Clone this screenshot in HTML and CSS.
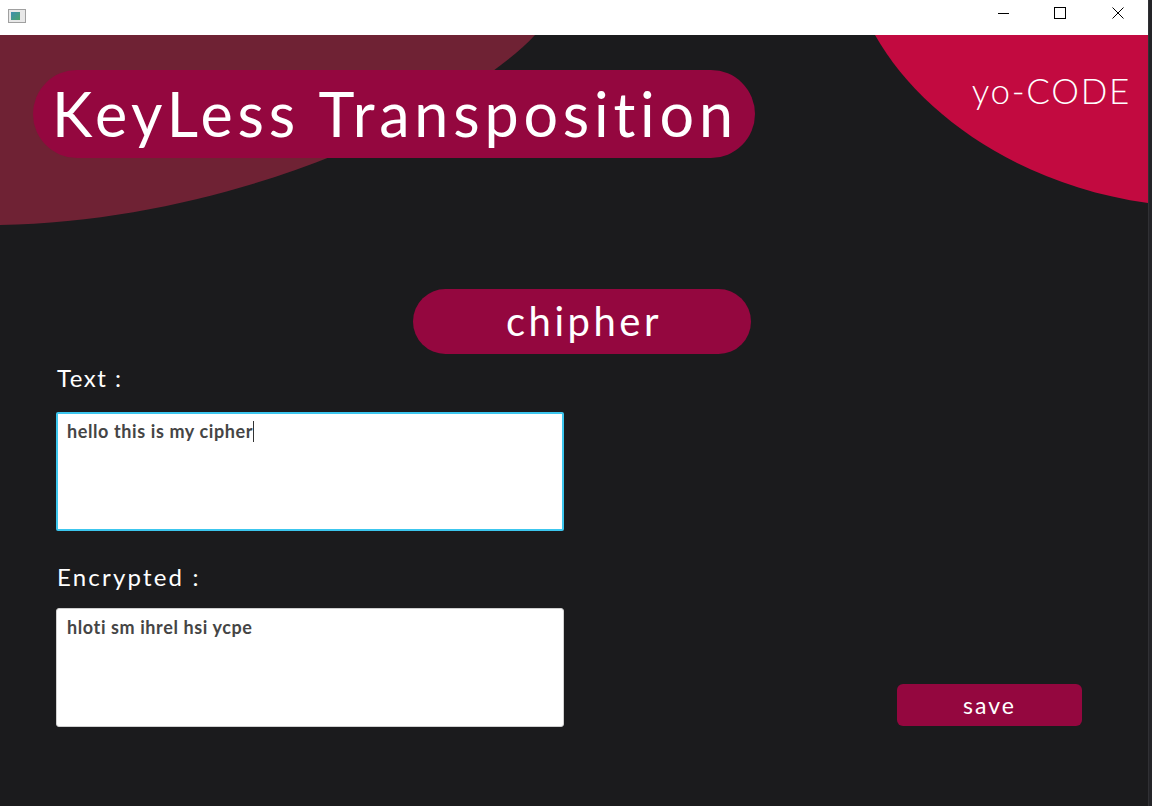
FILE: index.html
```html
<!DOCTYPE html>
<html>
<head>
<meta charset="utf-8">
<link rel="stylesheet" href="styles.css">
</head>
<body>
<div class="screen">
  <div class="window">
    <div class="titlebar">
      <div class="app-icon"><span class="app-icon-pane"></span></div>
      <div class="controls">
        <span class="ctrl">
          <svg width="12" height="12" viewBox="0 0 12 12"><path d="M0 6.5H11" stroke="#000" stroke-width="1"/></svg>
        </span>
        <span class="ctrl">
          <svg width="12" height="12" viewBox="0 0 12 12"><rect x="0.5" y="0.5" width="11" height="11" fill="none" stroke="#000" stroke-width="1"/></svg>
        </span>
        <span class="ctrl">
          <svg width="12" height="12" viewBox="0 0 12 12"><path d="M0.5 0.5L11.5 11.5M11.5 0.5L0.5 11.5" stroke="#000" stroke-width="1"/></svg>
        </span>
      </div>
    </div>
    <div class="app">
      <svg class="deco" width="1148" height="771" viewBox="0 0 1148 771">
        <path d="M0 0H535C470 70 250 185 0 190Z" fill="#6f2234"/>
        <path d="M875 0C920 80 1020 150 1148 168V0Z" fill="#c20a40"/>
      </svg>
      <header class="header">
        <h1 class="title">KeyLess Transposition</h1>
        <div class="brand">yo-CODE</div>
      </header>
      <div class="mode-row">
        <div class="mode">chipher</div>
      </div>
      <div class="form">
        <label class="label label-text">Text :</label>
        <div class="box box-focus"><span class="box-text">hello this is my cipher</span><span class="caret"></span></div>
        <label class="label label-enc">Encrypted :</label>
        <div class="bottom-row">
          <div class="box"><span class="box-text">hloti sm ihrel hsi ycpe</span></div>
          <button class="save">save</button>
        </div>
      </div>
    </div>
  </div>
  <div class="edge"></div>
</div>
</body>
</html>
```

FILE: styles.css
```css
* { box-sizing: border-box; }
html, body { margin: 0; padding: 0; }
body {
  width: 1152px;
  height: 806px;
  overflow: hidden;
  background: #1b1b1d;
  font-family: "Lato", "Noto Sans", sans-serif;
}
.screen {
  display: flex;
  width: 1152px;
  height: 806px;
}
.window {
  width: 1148px;
  height: 806px;
  display: flex;
  flex-direction: column;
}
.edge {
  width: 4px;
  height: 806px;
  background: #242428;
  border-left: 1px solid #303034;
}
.titlebar {
  height: 35px;
  background: #ffffff;
  display: flex;
  align-items: center;
  justify-content: space-between;
  padding-left: 8px;
}
.app-icon {
  width: 18px;
  height: 14px;
  border: 1px solid #a0a0a0;
  background: #e8e8e8;
  margin-top: -3px;
  padding: 2px;
  display: flex;
}
.app-icon-pane {
  width: 9px;
  height: 8px;
  background: linear-gradient(135deg, #3d8fb0, #4aa36a);
}
.controls {
  display: flex;
  height: 35px;
}
.ctrl {
  width: 56px;
  height: 35px;
  display: flex;
  align-items: center;
  justify-content: center;
  margin-top: -5px;
}
.ctrl:last-child { width: 60px; }
.app {
  position: relative;
  flex: 1;
  background: #1b1b1d;
  overflow: hidden;
}
.deco {
  position: absolute;
  left: 0;
  top: 0;
}
.header {
  position: relative;
  display: flex;
  align-items: flex-start;
  justify-content: space-between;
  padding: 35px 17px 0 33px;
}
.title {
  margin: 0;
  height: 88px;
  width: 722px;
  border-radius: 44px;
  background: #94073f;
  color: #ffffff;
  font-family: "Lato", sans-serif;
  font-weight: 400;
  font-size: 61px;
  letter-spacing: 4.8px;
  line-height: 88px;
  padding-left: 19px;
  white-space: nowrap;
}
.brand {
  color: #ffffff;
  font-family: "Lato", sans-serif;
  font-weight: 300;
  font-size: 35px;
  letter-spacing: 1.7px;
  margin-top: 0px;
  line-height: 40px;
}
.mode-row {
  position: relative;
  display: flex;
  padding-left: 413px;
  margin-top: 131px;
}
.mode {
  width: 338px;
  height: 65px;
  border-radius: 33px;
  background: #94073f;
  color: #ffffff;
  font-size: 40px;
  letter-spacing: 3.5px;
  text-align: center;
  line-height: 64px;
  padding-left: 4px;
}
.form {
  position: relative;
  display: flex;
  flex-direction: column;
  padding-left: 56px;
}
.label {
  color: #ffffff;
  font-size: 24px;
  line-height: 30px;
  padding-left: 1px;
  letter-spacing: 1.5px;
}
.label-text { margin-top: 9px; }
.label-enc { margin-top: 31px; letter-spacing: 2.2px; }
.box {
  width: 508px;
  height: 119px;
  background: #ffffff;
  border: 1px solid #d0d0d0;
  border-radius: 3px;
  padding: 7px 10px;
  display: flex;
  align-items: flex-start;
}
.box-focus {
  margin-top: 19px;
  height: 119px;
  border: 2px solid #3cc6ee;
  border-radius: 2px;
  padding: 6px 9px;
}
.box-text {
  color: #454545;
  font-size: 18px;
  font-weight: 700;
  letter-spacing: 0.6px;
  line-height: 22px;
}
.caret {
  width: 1px;
  height: 21px;
  background: #333;
  margin-left: 0px;
  margin-top: 1px;
}
.bottom-row {
  display: flex;
  align-items: flex-end;
  margin-top: 16px;
}
.save {
  margin-left: auto;
  margin-right: 66px;
  margin-bottom: 1px;
  width: 185px;
  height: 42px;
  border: none;
  border-radius: 6px;
  background: #94073f;
  color: #ffffff;
  font-family: "Lato", sans-serif;
  font-size: 23px;
  letter-spacing: 2px;
  padding: 0;
  line-height: 42px;
}
```
